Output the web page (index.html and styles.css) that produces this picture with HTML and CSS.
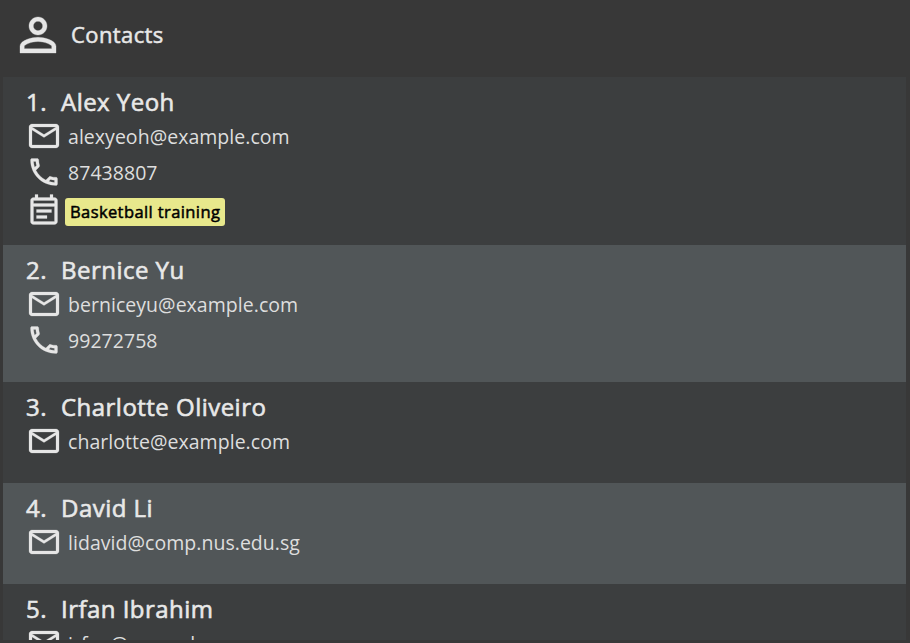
FILE: index.html
```html
<!DOCTYPE html>
<html lang="en">
<head>
<meta charset="utf-8">
<title>Contacts</title>
<link rel="stylesheet" href="styles.css">
</head>
<body>
<svg class="sprite" aria-hidden="true">
  <symbol id="person" viewBox="0 0 24 24"><path d="M12 5.9a2.1 2.1 0 1 1 0 4.2 2.1 2.1 0 0 1 0-4.2m0 9c2.97 0 6.1 1.46 6.1 2.1v1.1H5.9V17c0-.64 3.13-2.1 6.1-2.1M12 4C9.79 4 8 5.79 8 8s1.790 4 4 4 4-1.790 4-4-1.790-4-4-4zm0 9c-2.670 0-8 1.340-8 4v3h16v-3c0-2.660-5.330-4-8-4z"/></symbol>
  <symbol id="mail" viewBox="0 0 24 24"><path d="M22 6c0-1.100-.9-2-2-2H4c-1.100 0-2 .9-2 2v12c0 1.100.9 2 2 2h16c1.100 0 2-.9 2-2V6zm-2 0l-8 5-8-5h16zm0 12H4V8l8 5 8-5v10z"/></symbol>
  <symbol id="phone" viewBox="0 0 24 24"><path d="M6.540 5c.06.89.21 1.760.45 2.590l-1.200 1.200c-.41-1.200-.67-2.470-.76-3.790h1.510m9.860 12.020c.85.24 1.720.39 2.600.45v1.490c-1.320-.09-2.590-.35-3.800-.75l1.200-1.190M7.500 3H4c-.55 0-1 .45-1 1 0 9.390 7.610 17 17 17 .55 0 1-.45 1-1v-3.490c0-.55-.45-1-1-1-1.240 0-2.450-.2-3.570-.57-.1-.04-.21-.05-.31-.05-.26 0-.51.1-.71.290l-2.200 2.200c-2.830-1.450-5.150-3.760-6.590-6.590l2.200-2.200c.28-.28.36-.67.25-1.020C8.700 6.450 8.500 5.250 8.500 4c0-.55-.45-1-1-1z"/></symbol>
  <symbol id="event" viewBox="0 0 24 24"><path d="M19 3h-1V1h-2v2H8V1H6v2H5c-1.110 0-1.990.9-1.990 2L3 19c0 1.100.89 2 2 2h14c1.100 0 2-.9 2-2V5c0-1.100-.9-2-2-2zm0 16H5V9h14v10zM5 7V5h14v2H5zm2 4h10v2H7zm0 4h7v2H7z"/></symbol>
</svg>
<div class="panel">
  <header class="header">
    <svg class="header-icon"><use href="#person"/></svg>
    <h1 class="title">Contacts</h1>
  </header>
  <ol class="list">
    <li class="card card-tagged">
      <h2 class="name"><span class="index">1.</span>Alex Yeoh</h2>
      <div class="row"><svg class="icon"><use href="#mail"/></svg><span class="text">alexyeoh@example.com</span></div>
      <div class="row"><svg class="icon"><use href="#phone"/></svg><span class="text">87438807</span></div>
      <div class="row row-tags"><svg class="icon"><use href="#event"/></svg><span class="tag">Basketball training</span></div>
    </li>
    <li class="card">
      <h2 class="name"><span class="index">2.</span>Bernice Yu</h2>
      <div class="row"><svg class="icon"><use href="#mail"/></svg><span class="text">berniceyu@example.com</span></div>
      <div class="row"><svg class="icon"><use href="#phone"/></svg><span class="text">99272758</span></div>
    </li>
    <li class="card">
      <h2 class="name"><span class="index">3.</span>Charlotte Oliveiro</h2>
      <div class="row"><svg class="icon"><use href="#mail"/></svg><span class="text">charlotte@example.com</span></div>
    </li>
    <li class="card">
      <h2 class="name"><span class="index">4.</span>David Li</h2>
      <div class="row"><svg class="icon"><use href="#mail"/></svg><span class="text">lidavid@comp.nus.edu.sg</span></div>
    </li>
    <li class="card">
      <h2 class="name"><span class="index">5.</span>Irfan Ibrahim</h2>
      <div class="row"><svg class="icon"><use href="#mail"/></svg><span class="text">irfan@example.com</span></div>
    </li>
  </ol>
</div>
</body>
</html>
```
FILE: styles.css
```css
* { box-sizing: border-box; }
body {
  margin: 0;
  background: #383838;
  color: #e8e8e8;
  font-family: "Open Sans", sans-serif;
}
.sprite { display: none; }
svg { display: block; flex: none; fill: #e6e6e6; stroke: #e6e6e6; stroke-width: 0.15; }
.panel {
  display: flex;
  flex-direction: column;
  height: 643px;
  padding: 0 4px 3px 3px;
  overflow: hidden;
}
.header {
  display: flex;
  align-items: center;
  gap: 6px;
  height: 77px;
  flex: none;
  padding: 0 0 7px 8px;
}
.header-icon { width: 54px; height: 54px; }
.title {
  margin: -2px 0 0;
  font-size: 22px;
  font-weight: 400;
  line-height: 30px;
  letter-spacing: 0.4px;
  -webkit-text-stroke: 0.5px;
}
.list {
  flex: 1;
  min-height: 0;
  margin: 0;
  padding: 0;
  overflow: hidden;
  list-style: none;
}
.card { padding: 9px 23px 24px; background: #3c3e3f; }
.card:nth-child(even) { background: #515658; }
.card-tagged { padding-bottom: 16px; }
.name {
  display: flex;
  margin: 0;
  font-size: 24px;
  font-weight: 400;
  line-height: 32px;
  letter-spacing: 0.47px;
  -webkit-text-stroke: 0.6px;
}
.index { width: 35px; }
.row { display: flex; align-items: center; height: 36px; }
.icon { width: 36px; height: 36px; }
.text {
  margin: 2px 0 0 6px;
  color: #dedede;
  font-size: 19.5px;
  line-height: 28px;
  letter-spacing: 0.04px;
}
.row-tags { height: 39px; padding-top: 3px; }
.tag {
  margin: 2px 0 0 3px;
  padding: 0 5px;
  border-radius: 3px;
  background: #e8e88c;
  color: #000;
  font-size: 16.5px;
  font-weight: 400;
  line-height: 28px;
  letter-spacing: 0.4px;
  -webkit-text-stroke: 0.5px;
}
```
